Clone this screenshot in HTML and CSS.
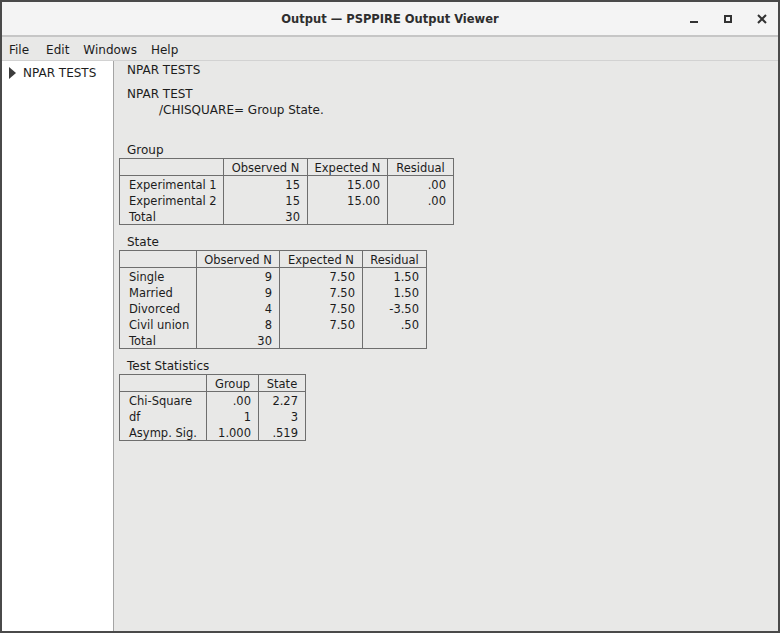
FILE: index.html
```html
<!DOCTYPE html>
<html lang="en">
<head>
<meta charset="utf-8">
<title>Output — PSPPIRE Output Viewer</title>
<link rel="stylesheet" href="styles.css">
</head>
<body>
<div class="window">
  <header class="titlebar">
    <div class="title">Output — PSPPIRE Output Viewer</div>
    <div class="controls">
      <span class="ctl"><svg width="16" height="16" viewBox="0 0 16 16"><rect x="4" y="10" width="8" height="2" fill="#333"/></svg></span>
      <span class="ctl"><svg width="16" height="16" viewBox="0 0 16 16"><rect x="5" y="5" width="6" height="6" fill="none" stroke="#333" stroke-width="2"/></svg></span>
      <span class="ctl"><svg width="16" height="16" viewBox="0 0 16 16"><path d="M4 4 L12 12 M12 4 L4 12" stroke="#333" stroke-width="2" fill="none"/></svg></span>
    </div>
  </header>
  <nav class="menubar">
    <span class="menu menu-file">File</span>
    <span class="menu">Edit</span>
    <span class="menu">Windows</span>
    <span class="menu">Help</span>
  </nav>
  <div class="main">
    <aside class="sidebar">
      <div class="node"><span class="tri"></span><span>NPAR TESTS</span></div>
    </aside>
    <section class="output">
      <div class="line heading">NPAR TESTS</div>
      <div class="syntax">
        <div class="line">NPAR TEST</div>
        <div class="line indent">/CHISQUARE= Group State.</div>
      </div>

      <div class="block first">
        <div class="caption">Group</div>
        <table class="pt t-group">
          <colgroup><col class="g1"><col class="g2"><col class="g3"><col class="g4"></colgroup>
          <thead><tr><th></th><th>Observed N</th><th>Expected N</th><th>Residual</th></tr></thead>
          <tbody>
            <tr><td class="stub">Experimental 1</td><td>15</td><td>15.00</td><td>.00</td></tr>
            <tr><td class="stub">Experimental 2</td><td>15</td><td>15.00</td><td>.00</td></tr>
            <tr><td class="stub">Total</td><td>30</td><td></td><td></td></tr>
          </tbody>
        </table>
      </div>

      <div class="block">
        <div class="caption">State</div>
        <table class="pt t-state">
          <colgroup><col class="s1"><col class="s2"><col class="s3"><col class="s4"></colgroup>
          <thead><tr><th></th><th>Observed N</th><th>Expected N</th><th>Residual</th></tr></thead>
          <tbody>
            <tr><td class="stub">Single</td><td>9</td><td>7.50</td><td>1.50</td></tr>
            <tr><td class="stub">Married</td><td>9</td><td>7.50</td><td>1.50</td></tr>
            <tr><td class="stub">Divorced</td><td>4</td><td>7.50</td><td>-3.50</td></tr>
            <tr><td class="stub">Civil union</td><td>8</td><td>7.50</td><td>.50</td></tr>
            <tr><td class="stub">Total</td><td>30</td><td></td><td></td></tr>
          </tbody>
        </table>
      </div>

      <div class="block">
        <div class="caption">Test Statistics</div>
        <table class="pt t-stats">
          <colgroup><col class="x1"><col class="x2"><col class="x3"></colgroup>
          <thead><tr><th></th><th>Group</th><th>State</th></tr></thead>
          <tbody>
            <tr><td class="stub">Chi-Square</td><td>.00</td><td>2.27</td></tr>
            <tr><td class="stub">df</td><td>1</td><td>3</td></tr>
            <tr><td class="stub">Asymp. Sig.</td><td>1.000</td><td>.519</td></tr>
          </tbody>
        </table>
      </div>
    </section>
  </div>
</div>
</body>
</html>
```
FILE: styles.css
```css
* { box-sizing: border-box; }
html, body { margin: 0; padding: 0; }
body {
  width: 780px;
  height: 633px;
  overflow: hidden;
  font-family: "DejaVu Sans", sans-serif;
  color: #1c1c1c;
}
.window {
  width: 780px;
  height: 633px;
  border: 2px solid #4a4a4a;
  display: flex;
  flex-direction: column;
  background: #e8e8e7;
}
.titlebar {
  height: 35px;
  flex: none;
  background: #f4f4f4;
  border-bottom: 2px solid #c6c6c6;
  display: grid;
  grid-template-columns: 1fr auto 1fr;
  align-items: center;
}
.title {
  grid-column: 2;
  font-weight: bold;
  font-size: 11.5px;
  color: #2e2e2e;
  white-space: nowrap;
}
.controls {
  grid-column: 3;
  justify-self: end;
  display: flex;
  margin-right: -1px;
}
.ctl {
  width: 34px;
  height: 33px;
  display: flex;
  align-items: center;
  justify-content: center;
}
.ctl svg { display: block; }
.menubar {
  height: 24px;
  flex: none;
  border-bottom: 1px solid #d2d2d2;
  display: flex;
  align-items: center;
  font-size: 12px;
  padding-top: 2px;
}
.menu { padding: 0 7px; }
.menu-file { padding-right: 10px; }
.main {
  flex: 1;
  display: flex;
  min-height: 0;
}
.sidebar {
  width: 112px;
  flex: none;
  background: #fff;
  border-right: 1px solid #a4a4a4;
  padding-top: 4px;
}
.node {
  display: flex;
  align-items: center;
  height: 16px;
  font-size: 12px;
  padding-left: 7px;
  gap: 7px;
}
.tri {
  width: 0;
  height: 0;
  margin-top: -1px;
  border-left: 7px solid #3c3c3c;
  border-top: 6px solid transparent;
  border-bottom: 6px solid transparent;
}
.output {
  flex: 1;
  padding-left: 5px;
  font-size: 11.5px;
}
.line {
  line-height: 14px;
  padding-top: 2px;
  padding-left: 8px;
  white-space: nowrap;
}
.heading { font-size: 12px; }
.syntax { margin-top: 8px; font-size: 12px; }
.indent { padding-left: 40px; }
.block { margin-top: 9px; }
.block.first { margin-top: 25px; }
.caption {
  line-height: 15px;
  padding-top: 1px;
  padding-left: 8px;
  font-size: 12px;
}
.pt {
  border-collapse: collapse;
  table-layout: fixed;
  border: 1px solid #6e6e6e;
}
.pt th, .pt td {
  padding: 2px 7px 0 0;
  line-height: 14px;
  white-space: nowrap;
  border-left: 1px solid #6e6e6e;
  border-right: 1px solid #6e6e6e;
  font-weight: normal;
}
.pt th {
  text-align: center;
  padding: 2px 0 0 0;
  border-bottom: 1px solid #6e6e6e;
}
.pt td { text-align: right; }
.pt td.stub { text-align: left; padding: 2px 0 0 9px; }
.t-group { width: 334px; }
.g1 { width: 104px; }
.g2 { width: 84px; }
.g3 { width: 80px; }
.g4 { width: 66px; }
.t-state { width: 307px; }
.s1 { width: 77px; }
.s2 { width: 83px; }
.s3 { width: 83px; }
.s4 { width: 64px; }
.t-stats { width: 186px; }
.x1 { width: 87px; }
.x2 { width: 52px; }
.x3 { width: 47px; }
```
